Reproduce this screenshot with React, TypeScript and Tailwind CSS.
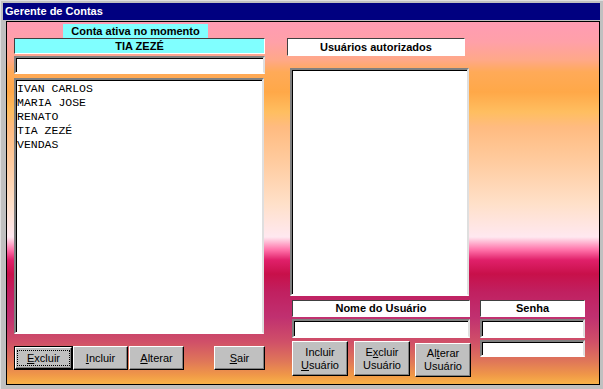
const sunken =
  "border-2 border-t-[#808080] border-l-[#808080] border-b-white border-r-[#dfdfdf] shadow-[inset_1px_1px_0_#000] bg-white";

const raised =
  "bg-[#c0c0c0] border border-t-white border-l-white border-b-black border-r-black shadow-[inset_-1px_-1px_0_#808080] flex items-center justify-center text-[11px] leading-[13px] text-black";

const labelBox =
  "border-t border-l border-t-[#404040] border-l-[#404040] border-b border-r border-b-white border-r-white flex items-center justify-center font-bold text-[11px] text-black";

const gradient =
  "bg-[linear-gradient(to_bottom,#ff9cb4_0px,#ffa0a8_20px,#ffa888_38px,#ffaa58_50px,#ffa848_70px,#ffbe60_90px,#ffbb80_105px,#ffcca0_141px,#ffe0c8_181px,#ffe8f0_215px,#ff70a8_228px,#e0206a_238px,#c8104a_252px,#c02060_270px,#c03070_295px,#d05068_320px,#e07858_340px,#f09848_353px,#f8b048_361px)]";

const users = ["IVAN CARLOS", "MARIA JOSE", "RENATO", "TIA ZEZÉ", "VENDAS"];

function Btn({ className, children }: { className: string; children: React.ReactNode }) {
  return <div className={`${raised} ${className}`}>{children}</div>;
}

export default function App() {
  return (
    <div className="w-[603px] h-[389px] bg-[#c0c0c0] border-l border-t border-l-[#dfdfdf] border-t-[#dfdfdf] p-[2px] flex flex-col font-['Liberation_Sans',Arial,sans-serif]">
      {/* title bar */}
      <div className="h-[17px] bg-[#000080] text-white font-bold text-[11px] flex items-center pl-[2px] mr-[1px]">
        Gerente de Contas
      </div>

      <div className="flex-1 mt-[1px] ml-[3px] mr-[1px] mb-[2px] border border-black">
        <div className={`h-full flex ${gradient}`}>
          {/* left column */}
          <div className="ml-[7px] w-[251px] flex flex-col">
            <div className="mt-[2px] ml-[49px] w-[145px] h-[14px] bg-[#80ffff] flex items-center justify-center font-bold text-[11px] text-black">
              Conta ativa no momento
            </div>
            <div className={`${labelBox} h-[16px] bg-[#80ffff]`}>TIA ZEZÉ</div>
            <div className={`${sunken} mt-[2px] h-[18px]`} />
            <div className={`${sunken} mt-[4px] h-[256px] w-[250px] pt-[2px] pl-[1px]`}>
              {users.map((u) => (
                <div
                  key={u}
                  className="h-[14px] leading-[14px] text-[11.5px] text-black font-['Liberation_Mono','Courier_New',monospace] whitespace-pre"
                >
                  {u}
                </div>
              ))}
            </div>
            <div className="mt-[12px] flex h-[24px]">
              <div className="w-[59px] h-[24px] border border-black flex">
                <div className={`${raised} flex-1`}>
                  <div className="border border-dotted border-black w-[53px] h-[16px] flex items-center justify-center">
                    <span>
                      <u>E</u>xcluir
                    </span>
                  </div>
                </div>
              </div>
              <Btn className="w-[55px] h-[24px]">
                <span>
                  <u>I</u>ncluir
                </span>
              </Btn>
              <Btn className="ml-[1px] w-[55px] h-[24px]">
                <span>
                  <u>A</u>lterar
                </span>
              </Btn>
              <Btn className="ml-[30px] w-[51px] h-[24px]">
                <span>
                  <u>S</u>air
                </span>
              </Btn>
            </div>
          </div>

          {/* middle column */}
          <div className="ml-[22px] w-[185px] flex flex-col">
            <div className={`${labelBox} mt-[16px] w-[178px] h-[18px] bg-white`}>Usuários autorizados</div>
            <div className={`${sunken} mt-[12px] ml-[3px] w-[179px] h-[228px]`} />
            <div className={`${labelBox} mt-[4px] ml-[5px] w-[178px] h-[17px] bg-white`}>Nome do Usuário</div>
            <div className={`${sunken} mt-[2px] ml-[5px] w-[178px] h-[19px]`} />
            <div className="mt-[3px] ml-[5px] flex items-start">
              <Btn className="w-[56px] h-[35px] flex-col">
                <span>Incluir</span>
                <span>
                  <u>U</u>suário
                </span>
              </Btn>
              <Btn className="ml-[6px] w-[56px] h-[35px] flex-col">
                <span>
                  E<u>x</u>cluir
                </span>
                <span>Usuário</span>
              </Btn>
              <Btn className="ml-[5px] mt-[2px] w-[56px] h-[34px] flex-col">
                <span>
                  Al<u>t</u>erar
                </span>
                <span>Usuário</span>
              </Btn>
            </div>
          </div>

          {/* right column */}
          <div className="ml-[8px] w-[105px] flex flex-col">
            <div className={`${labelBox} mt-[278px] h-[17px] bg-white`}>Senha</div>
            <div className={`${sunken} mt-[2px] h-[19px]`} />
            <div className={`${sunken} mt-[2px] h-[17px]`} />
          </div>
        </div>
      </div>
    </div>
  );
}
